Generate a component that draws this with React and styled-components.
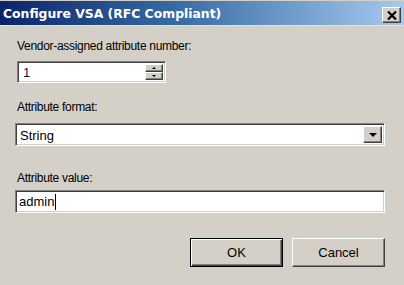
import styled, { createGlobalStyle } from 'styled-components';

const Global = createGlobalStyle`
    html, body {
        margin: 0;
        padding: 0;
        background: #d4d0c8;
    }
    body {
        font-family: "Liberation Sans", Arial, sans-serif;
        font-size: 12px;
        color: #000;
    }
`;

const Window = styled.div`
    width: 404px;
    height: 285px;
    background: #d4d0c8;
    display: flex;
    flex-direction: column;
    overflow: hidden;
`;

const TitleBar = styled.div`
    height: 24px;
    margin-top: 1px;
    display: flex;
    align-items: center;
    justify-content: space-between;
    padding: 0 3px 0 3px;
    background: linear-gradient(to right, #0a246a 0%, #3a6ea5 45%, #a6caf0 100%);
    border-bottom: 1px solid #e4e2dc;
`;

const Title = styled.span`
    color: #fff;
    font-family: "DejaVu Sans", Verdana, sans-serif;
    font-weight: bold;
    font-size: 12.4px;
`;

const CloseButton = styled.div`
    width: 19px;
    height: 16px;
    box-sizing: border-box;
    background: #d4d0c8;
    border-top: 1px solid #fff;
    border-left: 1px solid #fff;
    border-right: 1px solid #404040;
    border-bottom: 1px solid #404040;
    box-shadow: inset -1px -1px #808080;
    display: flex;
    align-items: center;
    justify-content: center;
    margin-top: 4px;
`;

const Body = styled.div`
    flex: 1;
    display: flex;
    flex-direction: column;
    padding: 13px 17px 0 15px;
`;

const Field = styled.div`
    display: flex;
    flex-direction: column;
    margin-bottom: ${(p) => p.$gap || 0}px;
`;

const Label = styled.label`
    font-size: 12px;
    letter-spacing: -0.3px;
    line-height: 15px;
    padding-left: 2px;
    margin-bottom: ${(p) => p.$gap || 6}px;
`;

const sunken = `
    box-sizing: border-box;
    background: #fff;
    border-top: 1px solid #808080;
    border-left: 1px solid #808080;
    border-right: 1px solid #fff;
    border-bottom: 1px solid #fff;
    box-shadow: inset 1px 1px #404040, inset -1px -1px #d4d0c8;
`;

const raised = `
    box-sizing: border-box;
    background: #d4d0c8;
    border-top: 1px solid #fff;
    border-left: 1px solid #fff;
    border-right: 1px solid #404040;
    border-bottom: 1px solid #404040;
    box-shadow: inset -1px -1px #808080;
`;

const SpinRow = styled.div`
    display: flex;
    margin-left: 2px;
    width: 149px;
    height: 22px;
    ${sunken}
    padding: 2px;
`;

const SpinText = styled.div`
    flex: 1;
    font-size: 13px;
    line-height: 18px;
    padding-left: 3px;
    color: #1a0a3a;
`;

const SpinButtons = styled.div`
    width: 18px;
    display: flex;
    flex-direction: column;
`;

const SpinButton = styled.div`
    flex: 1;
    ${raised}
    display: flex;
    align-items: center;
    justify-content: center;
`;

const Arrow = styled.span`
    width: 0;
    height: 0;
    border-left: ${(p) => p.$size}px solid transparent;
    border-right: ${(p) => p.$size}px solid transparent;
    ${(p) => (p.$up ? 'border-bottom' : 'border-top')}: ${(p) => p.$size}px solid #000;
`;

const Select = styled.div`
    width: 370px;
    height: 23px;
    ${sunken}
    padding: 2px;
    display: flex;
    align-items: stretch;
`;

const SelectText = styled.div`
    flex: 1;
    font-size: 13px;
    line-height: 19px;
    padding-left: 2px;
`;

const DropButton = styled.div`
    width: 19px;
    ${raised}
    display: flex;
    align-items: center;
    justify-content: center;
`;

const TextInput = styled.div`
    width: 370px;
    height: 23px;
    ${sunken}
    padding: 2px 3px;
    font-size: 13px;
    line-height: 19px;
    display: flex;
    align-items: center;
`;

const Caret = styled.span`
    display: inline-block;
    width: 1px;
    height: 16px;
    background: #000;
    margin-left: 1px;
`;

const Buttons = styled.div`
    display: flex;
    justify-content: flex-end;
    gap: 9px;
    padding-right: 2px;
    margin-top: 25px;
`;

const Button = styled.div`
    width: 93px;
    height: 29px;
    box-sizing: border-box;
    background: #d4d0c8;
    font-size: 13px;
    display: flex;
    align-items: center;
    justify-content: center;
    border-top: 1px solid ${(p) => (p.$default ? '#000' : '#fff')};
    border-left: 1px solid ${(p) => (p.$default ? '#000' : '#fff')};
    border-right: 1px solid ${(p) => (p.$default ? '#000' : '#404040')};
    border-bottom: 1px solid ${(p) => (p.$default ? '#000' : '#404040')};
    box-shadow: ${(p) =>
        p.$default
            ? 'inset 1px 1px #fff, inset -1px -1px #404040, inset -2px -2px #808080'
            : 'inset -1px -1px #808080'};
`;

export default function App() {
    return (
        <Window>
            <Global />
            <TitleBar>
                <Title>Configure VSA (RFC Compliant)</Title>
                <CloseButton>
                    <svg width="10" height="9" viewBox="0 0 10 9">
                        <path d="M1 0.5 L9 8.5 M9 0.5 L1 8.5" stroke="#000" strokeWidth="2.2" />
                    </svg>
                </CloseButton>
            </TitleBar>
            <Body>
                <Field $gap={17}>
                    <Label $gap={7}>Vendor-assigned attribute number:</Label>
                    <SpinRow>
                        <SpinText>1</SpinText>
                        <SpinButtons>
                            <SpinButton>
                                <Arrow $up $size={2} />
                            </SpinButton>
                            <SpinButton>
                                <Arrow $size={2} />
                            </SpinButton>
                        </SpinButtons>
                    </SpinRow>
                </Field>
                <Field $gap={25}>
                    <Label $gap={8}>Attribute format:</Label>
                    <Select>
                        <SelectText>String</SelectText>
                        <DropButton>
                            <Arrow $size={4} />
                        </DropButton>
                    </Select>
                </Field>
                <Field>
                    <Label $gap={4}>Attribute value:</Label>
                    <TextInput>
                        admin
                        <Caret />
                    </TextInput>
                </Field>
                <Buttons>
                    <Button $default>OK</Button>
                    <Button>Cancel</Button>
                </Buttons>
            </Body>
        </Window>
    );
}
